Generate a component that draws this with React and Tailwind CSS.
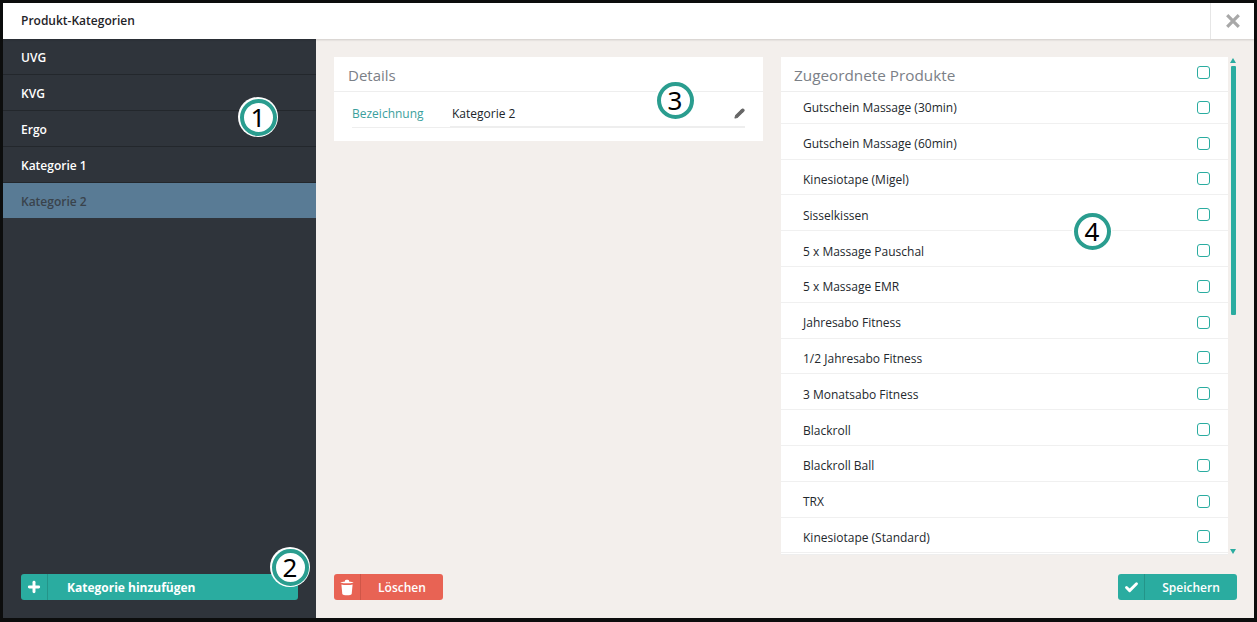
import React from "react";
import { Check, Plus, Pencil } from "lucide-react";

const cats = ["UVG", "KVG", "Ergo", "Kategorie 1"];
const products = [
  "Gutschein Massage (30min)",
  "Gutschein Massage (60min)",
  "Kinesiotape (Migel)",
  "Sisselkissen",
  "5 x Massage Pauschal",
  "5 x Massage EMR",
  "Jahresabo Fitness",
  "1/2 Jahresabo Fitness",
  "3 Monatsabo Fitness",
  "Blackroll",
  "Blackroll Ball",
  "TRX",
  "Kinesiotape (Standard)",
];

function Badge({ n, className }) {
  return (
    <div className={"absolute w-[40px] h-[40px] rounded-full bg-white flex items-center justify-center " + className}>
      <div className="w-[37px] h-[37px] rounded-full border-[4px] border-[#2a9d8f] bg-white flex items-center justify-center text-[26px] leading-none text-black font-['Noto_Sans',sans-serif]">
        {n}
      </div>
    </div>
  );
}

function Box({ className = "" }) {
  return <div className={"w-[13px] h-[13px] rounded-[3px] border border-[#2aaca0] bg-white shrink-0 " + className} />;
}

function Btn({ icon, label, color, divider, className = "", labelClass = "justify-center" }) {
  return (
    <div className={"h-[26px] rounded-[3px] flex items-stretch text-white text-[12px] " + color + " " + className}>
      <div className={"w-[27px] flex items-center justify-center border-r shrink-0 " + divider}>{icon}</div>
      <div className={"flex-1 flex items-center pt-[1px] " + labelClass}>{label}</div>
    </div>
  );
}

function TrashIcon() {
  return (
    <svg width="14" height="17" viewBox="0 0 14 17" fill="white">
      <path d="M5 1.6 C5 .6 9 .6 9 1.6 L9 2.4 C11 2.5 13 3 13.4 3.6 C13.4 4.6 .6 4.6 .6 3.6 C1 3 3 2.5 5 2.4 Z" />
      <path d="M1.4 5.4 C4 6.2 10 6.2 12.6 5.4 L11.7 15 C11.5 16.8 2.5 16.8 2.3 15 Z" />
    </svg>
  );
}

function CloseIcon() {
  return (
    <svg width="14" height="14" viewBox="0 0 14 14" fill="none" stroke="#a8a8a8" strokeWidth="3.2">
      <path d="M1.2 1.2 L12.8 12.8 M12.8 1.2 L1.2 12.8" />
    </svg>
  );
}

export default function App() {
  return (
    <div className="w-[1257px] h-[622px] bg-[#0c0d0d] p-[3px] pb-[4px] overflow-hidden font-['Open_Sans','Noto_Sans',sans-serif] text-[12px] relative">
      <div className="w-full h-full flex flex-col bg-[#f3efec]">
        <header className="h-[36px] bg-white flex items-stretch shrink-0 shadow-[0_1px_2px_rgba(0,0,0,0.15)] z-10">
          <div className="flex-1 flex items-center pl-[18px] font-semibold text-[#1f2429] text-[12px]">Produkt-Kategorien</div>
          <div className="w-[44px] border-l border-[#e6e6e6] flex items-center justify-center">
            <CloseIcon />
          </div>
        </header>
        <div className="flex-1 flex min-h-0">
          <aside className="w-[313px] bg-[#2f343b] flex flex-col shrink-0">
            <div className="flex-1">
              {cats.map((c) => (
                <div key={c} className="h-[36px] flex items-center pl-[18px] pt-[3px] text-white font-semibold border-b border-[#23272c]">{c}</div>
              ))}
              <div className="h-[35px] flex items-center pl-[18px] pt-[2px] bg-[#597b95] text-[#39434c] font-semibold">Kategorie 2</div>
            </div>
            <div className="px-[18px] pb-[18px]">
              <Btn
                icon={<Plus size={16} strokeWidth={4.4} />}
                label="Kategorie hinzufügen"
                color="bg-[#2aaca0] font-bold"
                divider="border-[#249489]"
                labelClass="justify-start pl-[19px]"
              />
            </div>
          </aside>
          <main className="flex-1 flex flex-col min-w-0">
            <div className="flex-1 flex min-h-0 pt-[18px] pl-[18px] gap-[18px]">
              <section className="w-[429px] h-[84px] bg-white shrink-0">
                <h2 className="h-[35px] flex items-center pl-[14px] pt-[2px] text-[15px] text-[#7b8087] border-b border-[#eeeeee]">Details</h2>
                <div className="flex items-start pl-[18px] pr-[18px] pt-[10px]">
                  <div className="w-[98px] h-[26px] pb-[2px] flex items-center text-[#3b9f9d] border-b border-[#eeeeee] shrink-0">Bezeichnung</div>
                  <div className="flex-1 h-[26px] pb-[1px] flex items-center justify-between pl-[2px] text-[#20252a] border-b-2 border-[#eeeeee]">
                    <span>Kategorie 2</span>
                    <Pencil size={11} strokeWidth={2.2} className="text-[#666] fill-[#666]" />
                  </div>
                </div>
              </section>
              <div className="w-[447px] flex flex-col shrink-0 h-[498px]">
                <section className="bg-white h-full overflow-hidden border-b border-[#eeeeee]">
                  <div className="relative z-10 bg-white h-[35px] flex items-center justify-between pl-[13px] pr-[18px] border-b border-[#eeeeee]">
                    <h2 className="text-[15.3px] text-[#7b8087] pt-[3px]">Zugeordnete Produkte</h2>
                    <Box className="-translate-y-[2px]" />
                  </div>
                  <div className="-mt-[4px]">
                    {products.map((p) => (
                      <div key={p} className="h-[35.8px] flex items-center justify-between pl-[22px] pr-[18px] pt-[4px] text-[#23282d] border-b border-[#f0f0f0]">
                        <span className="pt-[2px]">{p}</span>
                        <Box />
                      </div>
                    ))}
                  </div>
                </section>
              </div>
              <div className="w-[6px] h-[498px] flex flex-col items-center shrink-0 -ml-[16px]">
                <div className="w-0 h-0 mt-[1px] border-l-[3px] border-r-[3px] border-b-[5px] border-l-transparent border-r-transparent border-b-[#2aaca0]" />
                <div className="w-[5px] h-[249px] mt-[3px] bg-[#2aaca0] rounded-[1px]" />
                <div className="flex-1" />
                <div className="w-0 h-0 mb-[1px] border-l-[3px] border-r-[3px] border-t-[5px] border-l-transparent border-r-transparent border-t-[#2aaca0]" />
              </div>
            </div>
            <div className="flex justify-between pl-[18px] pr-[17px] pb-[18px] pt-[19px]">
              <Btn
                icon={<TrashIcon />}
                label="Löschen"
                color="bg-[#e86354] font-semibold"
                divider="border-[#cf5648]"
                className="w-[109px]"
              />
              <Btn
                icon={<Check size={15} strokeWidth={4.6} />}
                label="Speichern"
                color="bg-[#2aaca0] font-semibold"
                divider="border-[#249489]"
                className="w-[119px]"
              />
            </div>
          </main>
        </div>
      </div>
      <Badge n="1" className="left-[238px] top-[97px]" />
      <Badge n="2" className="left-[270px] top-[547px]" />
      <Badge n="3" className="left-[655px] top-[80px]" />
      <Badge n="4" className="left-[1072px] top-[211px]" />
    </div>
  );
}
